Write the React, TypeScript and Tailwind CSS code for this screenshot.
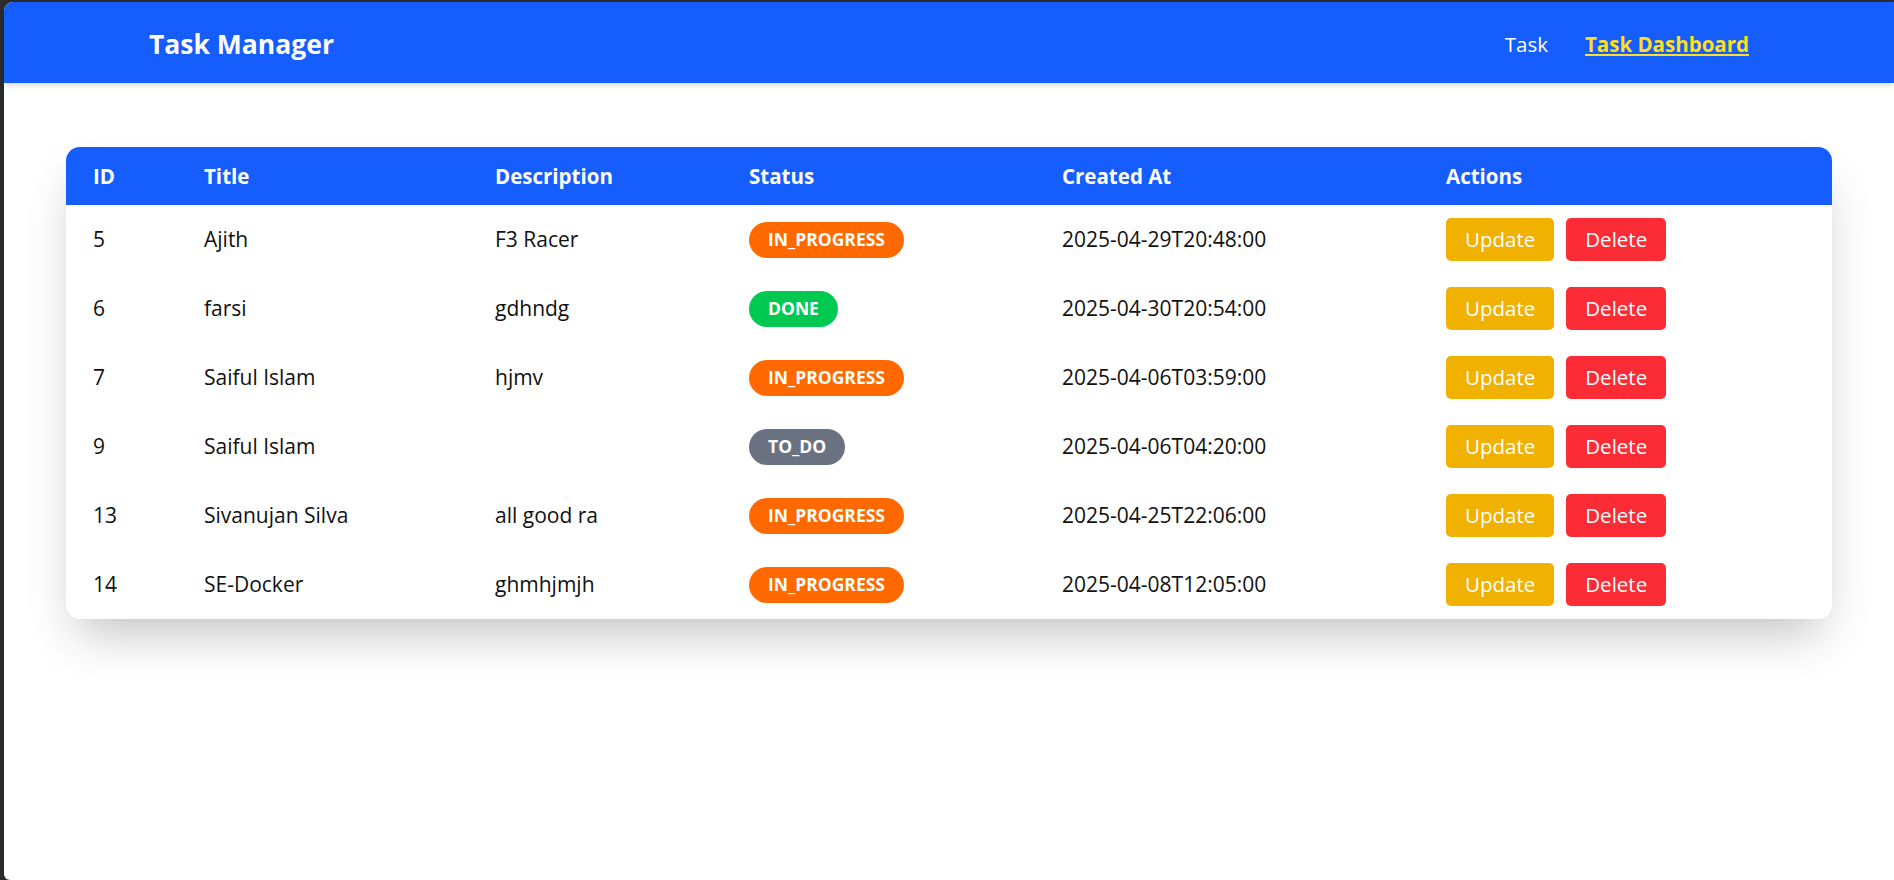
import React from 'react';

type Task = {
  id: number;
  title: string;
  description: string;
  status: 'IN_PROGRESS' | 'DONE' | 'TO_DO';
  createdAt: string;
};

const tasks: Task[] = [
  { id: 5, title: 'Ajith', description: 'F3 Racer', status: 'IN_PROGRESS', createdAt: '2025-04-29T20:48:00' },
  { id: 6, title: 'farsi', description: 'gdhndg', status: 'DONE', createdAt: '2025-04-30T20:54:00' },
  { id: 7, title: 'Saiful Islam', description: 'hjmv', status: 'IN_PROGRESS', createdAt: '2025-04-06T03:59:00' },
  { id: 9, title: 'Saiful Islam', description: '', status: 'TO_DO', createdAt: '2025-04-06T04:20:00' },
  { id: 13, title: 'Sivanujan Silva', description: 'all good ra', status: 'IN_PROGRESS', createdAt: '2025-04-25T22:06:00' },
  { id: 14, title: 'SE-Docker', description: 'ghmhjmjh', status: 'IN_PROGRESS', createdAt: '2025-04-08T12:05:00' },
];

const statusColors: Record<Task['status'], string> = {
  IN_PROGRESS: 'bg-orange-500',
  DONE: 'bg-green-500',
  TO_DO: 'bg-gray-500',
};

const Navbar: React.FC = () => (
  <nav className="flex h-[81px] items-center justify-between rounded-tl-[9px] bg-blue-600 px-[145px] pt-[4px] shadow-md">
    <span className="text-[26.5px] font-bold text-white">Task Manager</span>
    <div className="flex items-center gap-[37px] text-[20.5px]">
      <a className="text-white">Task</a>
      <a className="font-bold text-yellow-300 underline">Task Dashboard</a>
    </div>
  </nav>
);

const TaskTable: React.FC = () => {
  const headers = ['ID', 'Title', 'Description', 'Status', 'Created At', 'Actions'];
  const widths = ['w-[111px]', 'w-[291px]', 'w-[254px]', 'w-[313px]', 'w-[384px]', ''];

  return (
    <div className="overflow-hidden rounded-[14px] bg-white shadow-2xl">
      <table className="w-full table-fixed border-collapse text-left">
        <thead className="bg-blue-600 text-[20.5px] text-white">
          <tr className="h-[58px]">
            {headers.map((h, i) => (
              <th key={h} className={`${widths[i]} px-[27px] font-bold`}>
                {h}
              </th>
            ))}
          </tr>
        </thead>
        <tbody className="text-[21px] text-[#111]">
          {tasks.map((task) => (
            <tr key={task.id} className="h-[69px]">
              <td className="px-[27px]">{task.id}</td>
              <td className="px-[27px]">{task.title}</td>
              <td className="px-[27px]">{task.description}</td>
              <td className="px-[27px]">
                <span
                  className={`inline-flex h-[36px] items-center rounded-full px-[19px] text-[17.5px] font-bold text-white ${statusColors[task.status]}`}
                >
                  {task.status}
                </span>
              </td>
              <td className="px-[27px]">{task.createdAt}</td>
              <td className="px-[27px]">
                <div className="flex gap-[12px]">
                  <button className="h-[43px] rounded-[5px] bg-yellow-500 px-[19px] text-[20.5px] text-white">Update</button>
                  <button className="h-[43px] rounded-[5px] bg-red-500 px-[19px] text-[20.5px] text-white">Delete</button>
                </div>
              </td>
            </tr>
          ))}
        </tbody>
      </table>
    </div>
  );
}

export default function App() {
  return (
    <div
      className="h-[880px] w-full bg-[#2b2b2b] pl-[4px] pt-[2px]"
      style={{ fontFamily: '"Open Sans", "Noto Sans", sans-serif' }}
    >
      <div className="h-full rounded-tl-[9px] rounded-bl-[6px] bg-white">
        <Navbar />
        <main className="px-[62px] pt-[64px]">
          <TaskTable />
        </main>
      </div>
    </div>
  );
}
